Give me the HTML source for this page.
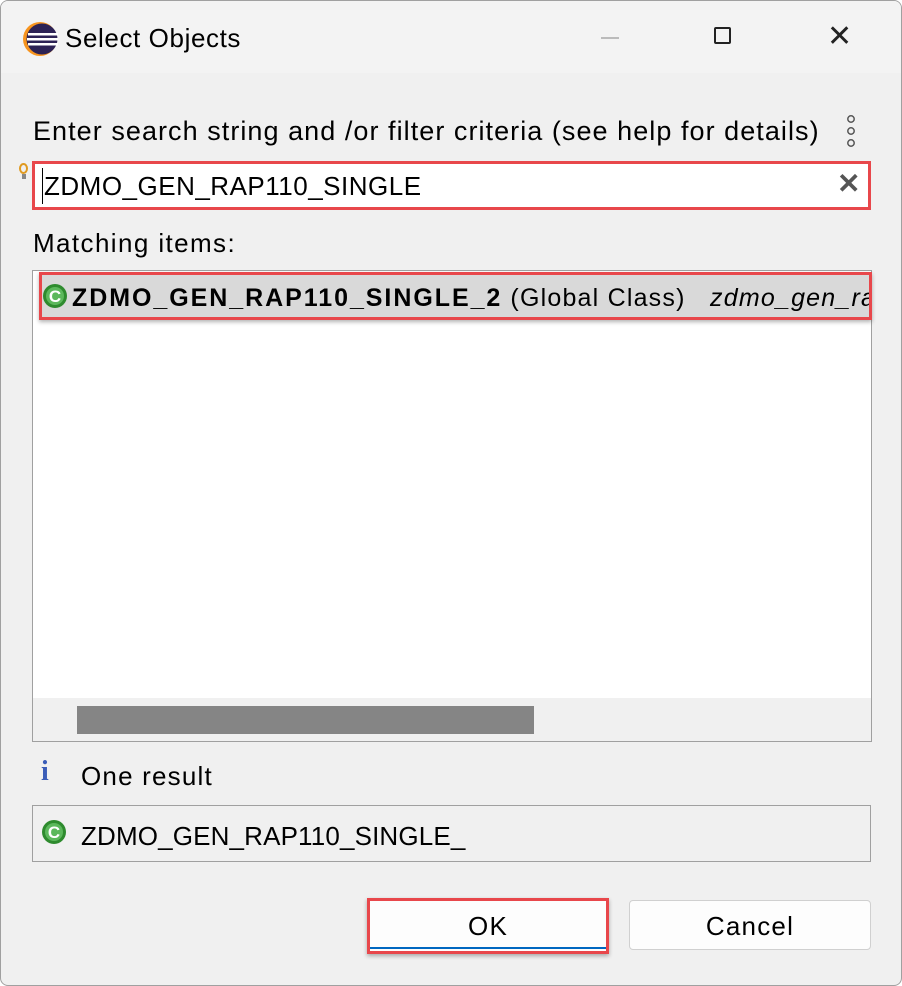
<!DOCTYPE html>
<html><head><style>
body{margin:0;width:902px;height:986px;background:#fff;font-family:"Liberation Sans",sans-serif;overflow:hidden;position:relative}
.win{position:absolute;left:0;top:0;width:900px;height:984px;background:#f0f0f0;border:1px solid #a0a0a0;border-radius:8px;overflow:hidden}
.title{position:absolute;left:0;top:0;width:900px;height:72px;background:#f3f3f3}
.a{position:absolute;white-space:nowrap;color:#000}
.t{font-size:26px;letter-spacing:1.2px}
</style></head><body>
<div class="win">
<div class="title"></div>
<svg class="a" style="left:21px;top:20px" width="38" height="36" viewBox="0 0 38 36">
<circle cx="18" cy="18" r="17" fill="#f7941e"/><circle cx="20" cy="18" r="15.5" fill="#2c2255"/>
<rect x="6" y="12" width="30" height="2.5" fill="#fff"/><rect x="5" y="17" width="31" height="2.5" fill="#fff"/><rect x="6" y="22" width="30" height="2.5" fill="#fff"/></svg>
<div class="a" style="left:64px;top:22px;font-size:26px;letter-spacing:0.6px">Select Objects</div>
<div class="a" style="left:600px;top:36px;width:18px;height:2px;background:#bbb"></div>
<div class="a" style="left:713px;top:26px;width:17px;height:17px;border:2px solid #222;border-radius:2px;box-sizing:border-box"></div>
<div class="a" style="left:826px;top:18px;font-size:30px;color:#222">✕</div>
<div class="a" style="left:32px;top:115px;font-size:27px;letter-spacing:1.05px">Enter search string and /or filter criteria (see help for details)</div>
<svg class="a" style="left:843px;top:114px" width="14" height="32"><circle cx="7" cy="4" r="3.2" fill="none" stroke="#555" stroke-width="1.5"/><circle cx="7" cy="16" r="3.2" fill="none" stroke="#555" stroke-width="1.5"/><circle cx="7" cy="28" r="3.2" fill="none" stroke="#555" stroke-width="1.5"/></svg>
<div class="a" style="left:18px;top:162px;width:9px;height:11px;border:2px solid #e09a20;border-radius:50%;box-sizing:border-box"></div>
<div class="a" style="left:21px;top:173px;width:4px;height:5px;background:#888"></div>
<div class="a" style="left:31px;top:160px;width:839px;height:49px;border:3px solid #e8474b;box-sizing:border-box;background:#fff"></div>
<div class="a" style="left:41px;top:167px;width:1px;height:36px;background:#000"></div>
<div class="a t" style="left:43px;top:170px;letter-spacing:0.5px">ZDMO_GEN_RAP110_SINGLE</div>
<div class="a" style="left:836px;top:166px;font-size:28px;font-weight:bold;color:#555">✕</div>
<div class="a t" style="left:32px;top:227px;letter-spacing:1.4px">Matching items:</div>
<div class="a" style="left:31px;top:269px;width:840px;height:472px;border:1px solid #a0a0a0;box-sizing:border-box;background:#fff"></div>
<div class="a" style="left:38px;top:271px;width:833px;height:48px;border:3px solid #e8474b;box-sizing:border-box;background:#d9d9d9;box-shadow:0 2px 4px rgba(0,0,0,.3);overflow:hidden">
<svg class="a" style="left:0px;top:8px" width="26" height="26"><circle cx="13" cy="13" r="12" fill="#2e8b2e"/><circle cx="13" cy="13" r="9" fill="#5cb85c"/><text x="13" y="19" text-anchor="middle" font-size="17" font-weight="bold" fill="#fff" font-family="Liberation Sans">C</text></svg>
<div class="a" style="left:30px;top:9px;font-size:25px;letter-spacing:1.2px"><b style="letter-spacing:1.95px">ZDMO_GEN_RAP110_SINGLE_2</b> (Global Class) &nbsp; <i>zdmo_gen_rap110_single</i></div>
</div>
<div class="a" style="left:32px;top:697px;width:838px;height:43px;background:#f0f0f0"></div>
<div class="a" style="left:76px;top:705px;width:457px;height:28px;background:#858585"></div>
<div class="a" style="left:40px;top:755px;font-size:28px;font-weight:bold;color:#3b5db8;font-family:'Liberation Serif',serif">i</div>
<div class="a t" style="left:80px;top:760px">One result</div>
<div class="a" style="left:31px;top:804px;width:839px;height:57px;border:1px solid #a0a0a0;box-sizing:border-box"></div>
<svg class="a" style="left:40px;top:818px" width="26" height="26"><circle cx="13" cy="13" r="12" fill="#2e8b2e"/><circle cx="13" cy="13" r="9" fill="#5cb85c"/><text x="13" y="19" text-anchor="middle" font-size="17" font-weight="bold" fill="#fff" font-family="Liberation Sans">C</text></svg>
<div class="a" style="left:80px;top:820px;font-size:26px;letter-spacing:0.15px">ZDMO_GEN_RAP110_SINGLE_</div>
<div class="a" style="left:366px;top:897px;width:242px;height:56px;border:3px solid #e8474b;box-sizing:border-box;background:#fdfdfd;box-shadow:0 2px 4px rgba(0,0,0,.3)"><div style="position:absolute;left:0;right:0;bottom:2px;height:2px;background:#0067c0"></div></div>
<div class="a t" style="left:366px;top:910px;width:242px;text-align:center">OK</div>
<div class="a" style="left:628px;top:899px;width:242px;height:50px;border:1px solid #d0d0d0;border-radius:4px;box-sizing:border-box;background:#fdfdfd"></div>
<div class="a t" style="left:628px;top:910px;width:242px;text-align:center">Cancel</div>
</div>
</body></html>
